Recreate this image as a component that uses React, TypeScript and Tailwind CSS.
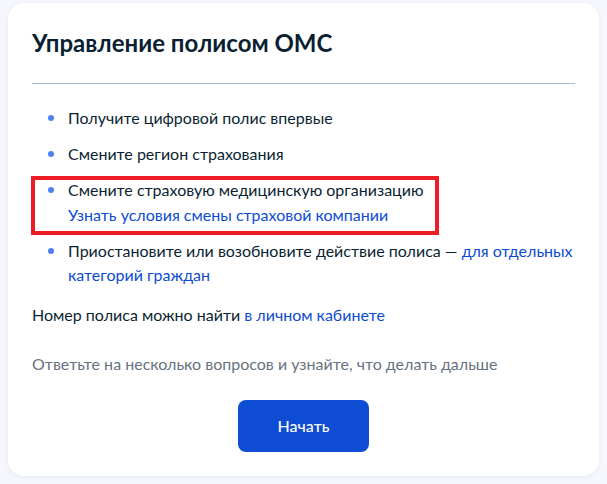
export default function App() {
  const items = [
    { text: 'Получите цифровой полис впервые' },
    { text: 'Смените регион страхования' },
    {
      text: 'Смените страховую медицинскую организацию',
      link: 'Узнать условия смены страховой компании',
      highlight: true,
    },
    {
      text: 'Приостановите или возобновите действие полиса — ',
      inlineLink: 'для отдельных категорий граждан',
    },
  ]

  return (
    <div className="min-h-screen bg-[#f5f7fc] px-2 pt-[3px] pb-2 font-['Lato','Noto_Sans',sans-serif] text-[#0b1f33]">
      <div className="rounded-2xl bg-white p-6 shadow-[0_1px_4px_rgba(60,90,160,0.08)]">
        <h1 className="text-2xl leading-8 font-bold">Управление полисом ОМС</h1>
        <div className="mt-6 h-px bg-[#a8b7dc]" />

        <ul className="mt-[22px] flex flex-col gap-3 text-base leading-6">
          {items.map((it, i) => (
            <li key={i} className="relative flex pl-[36px]">
              <span className="absolute left-[16px] top-[9px] h-[6px] w-[6px] rounded-full bg-[#4f7ff0]" />
              <div>
                {it.text}
                {it.inlineLink && <a className="text-[#0d4cd3]">{it.inlineLink}</a>}
                {it.link && <div className="mt-px text-[#0d4cd3]">{it.link}</div>}
              </div>
              {it.highlight && (
                <span className="pointer-events-none absolute -left-[1px] -top-[2px] h-[59px] w-[408px] border-4 border-[#ee1c25]" />
              )}
            </li>
          ))}
        </ul>

        <p className="mt-4 text-base leading-6">
          Номер полиса можно найти <a className="text-[#0d4cd3]">в личном кабинете</a>
        </p>

        <p className="mt-[25px] text-base leading-6 text-[#66727f]">
          Ответьте на несколько вопросов и узнайте, что делать дальше
        </p>

        <div className="mt-6 flex justify-center">
          <button className="h-[52px] w-[131px] rounded-lg bg-[#0d4cd3] text-base font-medium text-white">
            Начать
          </button>
        </div>
      </div>
    </div>
  )
}
